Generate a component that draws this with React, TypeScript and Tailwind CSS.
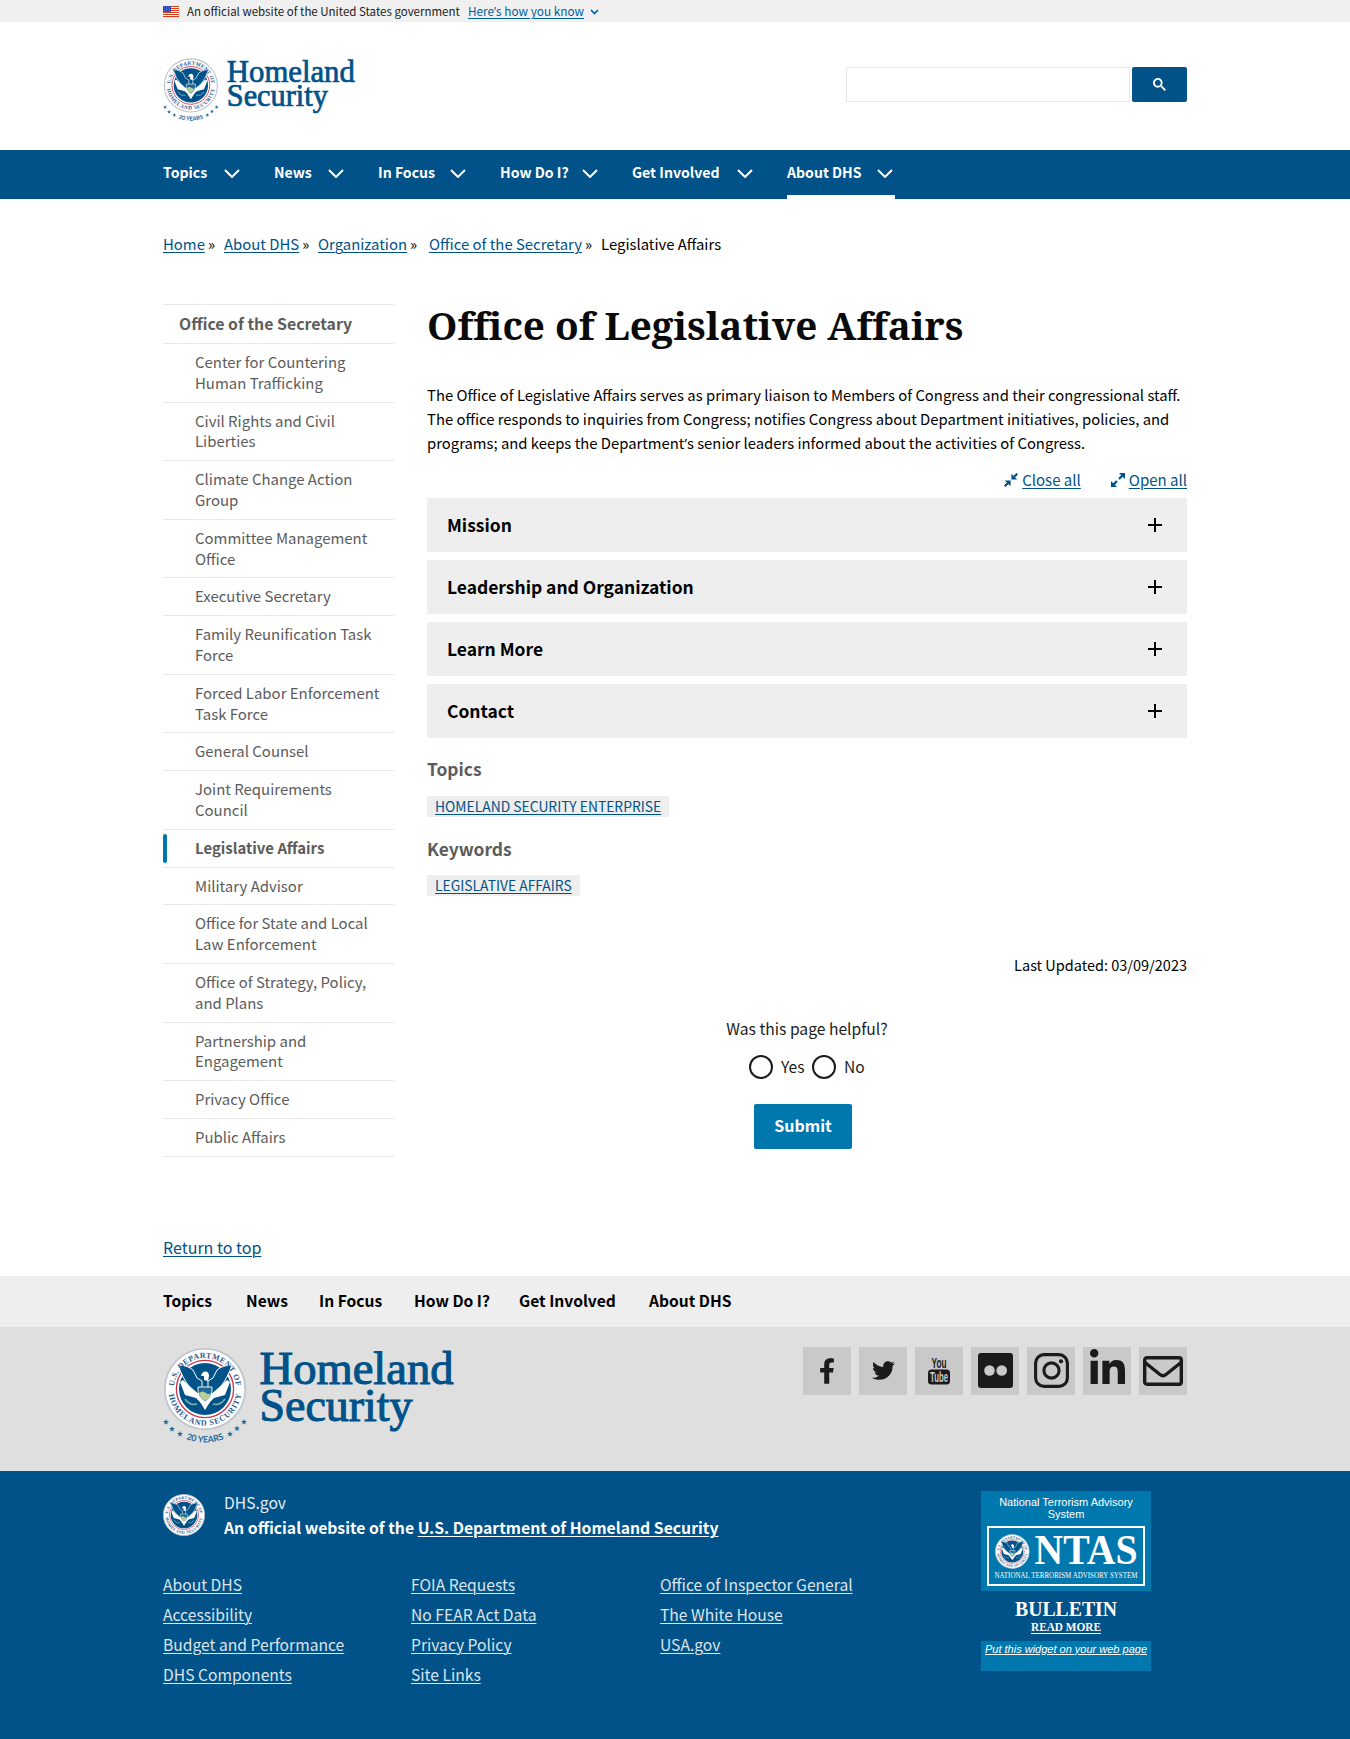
import React, { useId } from "react";
import { FaFacebookF, FaLinkedinIn, FaTwitter } from "react-icons/fa";

const sans = "font-['Noto_Sans_CJK_SC','Open_Sans',sans-serif]";
const link = "underline decoration-1 underline-offset-2";

const mainNav = [
  { label: "Topics", width: "w-[79px]", current: false },
  { label: "News", width: "w-[72px]", current: false },
  { label: "In Focus", width: "w-[90px]", current: false },
  { label: "How Do I?", width: "w-[100px]", current: false },
  { label: "Get Involved", width: "w-[123px]", current: false },
  { label: "About DHS", width: "w-[108px]", current: true },
];

const crumbs = [
  { label: "Home", width: "w-[61px]" },
  { label: "About DHS", width: "w-[94px]" },
  { label: "Organization", width: "w-[111px]" },
  { label: "Office of the Secretary", width: "w-[172px]" },
];

const sideLinks: string[][] = [
  ["Center for Countering", "Human Trafficking"],
  ["Civil Rights and Civil", "Liberties"],
  ["Climate Change Action", "Group"],
  ["Committee Management", "Office"],
  ["Executive Secretary"],
  ["Family Reunification Task", "Force"],
  ["Forced Labor Enforcement", "Task Force"],
  ["General Counsel"],
  ["Joint Requirements", "Council"],
  ["Legislative Affairs"],
  ["Military Advisor"],
  ["Office for State and Local", "Law Enforcement"],
  ["Office of Strategy, Policy,", "and Plans"],
  ["Partnership and", "Engagement"],
  ["Privacy Office"],
  ["Public Affairs"],
];

const footerNav = [
  { label: "Topics", width: "w-[83px]" },
  { label: "News", width: "w-[73px]" },
  { label: "In Focus", width: "w-[95px]" },
  { label: "How Do I?", width: "w-[105px]" },
  { label: "Get Involved", width: "w-[130px]" },
  { label: "About DHS", width: "w-[90px]" },
];

const footerLinks = [
  ["About DHS", "Accessibility", "Budget and Performance", "DHS Components"],
  ["FOIA Requests", "No FEAR Act Data", "Privacy Policy", "Site Links"],
  ["Office of Inspector General", "The White House", "USA.gov"],
];

/* Department seal drawn around (0, 0) with a radius of 41 units. */
function Seal() {
  const id = useId();
  return (
    <g>
      <circle r="40.2" fill="#fff" stroke="#bcc3cb" strokeWidth="1.6" />
      <circle r="28.6" fill="#fff" stroke="#c8324a" strokeWidth="1.3" />
      <circle r="26" fill="#005288" />
      {/* white lower feathers */}
      <path d="M-25 -7 L-20 6 L-9 9 L-4 14 L4 14 L9 9 L20 6 L25 -7 L22 -9 L9 3 L4 -2 L-4 -2 L-9 3 L-22 -9 Z" fill="#fff" />
      {/* raised wings */}
      <path d="M-27 -24 Q-18 -24 -12 -19 L-8 -11 L-3 -8 L-3 0 L-7 5 L-16 -3 Q-22 -10 -27 -24 Z" fill="#005288" stroke="#fff" strokeWidth="1" />
      <path d="M27 -24 Q18 -24 12 -19 L8 -11 L3 -8 L3 0 L7 5 L16 -3 Q22 -10 27 -24 Z" fill="#005288" stroke="#fff" strokeWidth="1" />
      {/* head */}
      <path d="M-4 -13 Q-3 -18 1 -17.5 Q4 -17 4 -13 L3 -8 L-1 -9 L-1 -13 Z" fill="#fff" />
      {/* shield */}
      <path d="M-7 -2 L7 -2 Q8 8 0 13 Q-8 8 -7 -2 Z" fill="#1f6795" stroke="#fff" strokeWidth=".9" />
      <path d="M-6 4 Q-2 1 1 4 Q4 6 6 4 Q4 10 0 12 Q-4 10 -6 4 Z" fill="#b9cf9a" />
      <path d="M-5 13 L0 21 L5 13 Z" fill="#fff" />
      <path d="M-20 10 Q-15 17 -8 15 M20 10 Q15 17 8 15" fill="none" stroke="#7fb3b0" strokeWidth="1.4" />
      <path id={id + "t"} d="M-31 0 A31 31 0 0 1 31 0" fill="none" />
      <path id={id + "b"} d="M-36.6 0 A36.6 36.6 0 0 0 36.6 0" fill="none" />
      <g className="font-['Liberation_Serif',serif]" fontSize="8" fontWeight="700" fill="#1f5c8f">
        <text textAnchor="middle" textLength="92">
          <textPath href={"#" + id + "t"} startOffset="50%">U.S. DEPARTMENT OF</textPath>
        </text>
        <text textAnchor="middle" textLength="104">
          <textPath href={"#" + id + "b"} startOffset="50%">HOMELAND SECURITY</textPath>
        </text>
      </g>
    </g>
  );
}

function Star({ x, y }: { x: number; y: number }) {
  return (
    <path
      transform={`translate(${x} ${y})`}
      d="M0 -3 L.8 -.9 L3 -.9 L1.2 .5 L1.9 2.6 L0 1.4 L-1.9 2.6 L-1.2 .5 L-3 -.9 L-.8 -.9 Z"
      fill="#1d6a9f"
    />
  );
}

function Logo({ className }: { className: string }) {
  const id = useId();
  return (
    <svg viewBox="0 0 292 100" className={`${className} overflow-visible`} role="img" aria-label="Homeland Security">
      <g transform="translate(42 43)">
        <Seal />
        <Star x={-39} y={33} />
        <Star x={-33} y={40} />
        <Star x={-25} y={45} />
        <Star x={25} y={45} />
        <Star x={32} y={39.5} />
        <Star x={39} y={33} />
        <path id={id} d="M-53.5 0 A53.5 53.5 0 0 0 53.5 0" fill="none" />
        <text className="font-['Lato',sans-serif]" fontSize="8.8" fontWeight="700" fill="#1d6a9f" textAnchor="middle" textLength="39">
          <textPath href={"#" + id} startOffset="50%">20 YEARS</textPath>
        </text>
      </g>
      <g className="font-['Liberation_Serif',serif]" fontSize="46.5" fill="#005288" stroke="#005288" strokeWidth="1.1">
        <text x="96.5" y="38.4" textLength="194" lengthAdjust="spacingAndGlyphs">Homeland</text>
        <text x="96.5" y="74.7" textLength="153" lengthAdjust="spacingAndGlyphs">Security</text>
      </g>
    </svg>
  );
}

function Flag() {
  return (
    <svg viewBox="0 0 16 11" className="h-[11px] w-4">
      <rect width="16" height="11" fill="#fff" />
      {[0, 2, 4, 6, 8, 10].map((y) => (
        <rect key={y} y={y} width="16" height="1" fill="#db3e1f" />
      ))}
      <rect width="8" height="6" fill="#1e33b1" />
      {[1, 3, 5].map((y) => (
        <path key={y} d={`M.8 ${y} h6.8`} stroke="#fff" strokeWidth=".7" strokeDasharray=".8 1.1" />
      ))}
    </svg>
  );
}

function Chevron() {
  return (
    <svg viewBox="0 0 16 9" className="h-[9px] w-4 shrink-0" fill="none" stroke="#fff" strokeWidth="2">
      <path d="M1 1 L8 8 L15 1" />
    </svg>
  );
}

function Apostrophe() {
  return <span className="font-['Open_Sans',sans-serif]">’</span>;
}

function Arrows({ inward }: { inward: boolean }) {
  return (
    <svg viewBox="0 0 14 14" className="h-3.5 w-3.5" fill="#005288" stroke="#005288">
      {inward ? (
        <>
          <path d="M7.4 .8 L7.4 6.6 L13.2 6.6 Z M6.6 13.2 L6.6 7.4 L.8 7.4 Z" stroke="none" />
          <path d="M8.5 5.5 L13.3 .7 M.7 13.3 L5.5 8.5" strokeWidth="2.2" />
        </>
      ) : (
        <>
          <path d="M8 0 L14 0 L14 6 Z M0 8 L0 14 L6 14 Z" stroke="none" />
          <path d="M8 6 L11.6 2.4 M6 8 L2.4 11.6" strokeWidth="2.2" />
        </>
      )}
    </svg>
  );
}

function YouTubeMark() {
  return (
    <svg viewBox="0 0 22 28" className="h-7 w-[22px] overflow-visible">
      <rect x="0" y="12.5" width="22" height="15" rx="3.5" fill="#1b1b1b" />
      <g className="font-['Liberation_Sans',sans-serif]" fontWeight="700">
        <text x="3.5" y="10.8" fontSize="14.5" fill="#1b1b1b" textLength="15" lengthAdjust="spacingAndGlyphs">You</text>
        <text x="2" y="25.2" fontSize="14.5" fill="#c9c9c9" textLength="18" lengthAdjust="spacingAndGlyphs">Tube</text>
      </g>
    </svg>
  );
}

function FlickrMark() {
  return (
    <svg viewBox="0 0 35 35" className="h-[35px] w-[35px]">
      <rect width="35" height="35" rx="3" fill="#1b1b1b" />
      <circle cx="11.5" cy="17.5" r="5.3" fill="#c9c9c9" />
      <circle cx="23.7" cy="17.5" r="5.3" fill="#c9c9c9" />
    </svg>
  );
}

function InstagramMark() {
  return (
    <svg viewBox="0 0 35 35" className="h-[35px] w-[35px]" fill="none" stroke="#1b1b1b" strokeWidth="3.1">
      <rect x="1.6" y="1.6" width="31.8" height="31.8" rx="8.5" />
      <circle cx="17.5" cy="17.5" r="7.6" />
      <circle cx="27" cy="8.3" r="2.1" fill="#1b1b1b" stroke="none" />
    </svg>
  );
}

function MailMark() {
  return (
    <svg viewBox="0 0 40 30" className="h-[30px] w-10" fill="none" stroke="#1b1b1b" strokeWidth="3.4">
      <rect x="1.7" y="1.7" width="36.6" height="26.6" rx="2.2" />
      <path d="M2 6.5 L17 18.5 Q20 21 23 18.5 L38 6.5" />
    </svg>
  );
}

function Accordion({ title }: { title: string }) {
  return (
    <button className="flex h-[54px] w-full items-center justify-between bg-[#eee] pr-[25px] pl-5 text-left">
      <span className="text-[17.45px] leading-6 font-bold text-black">{title}</span>
      <svg viewBox="0 0 14 14" className="h-3.5 w-3.5" stroke="#000" strokeWidth="2">
        <path d="M7 0 V14 M0 7 H14" />
      </svg>
    </button>
  );
}

function Tag({ children }: { children: string }) {
  return (
    <div className="flex">
      <span className="h-[21px] bg-[#eee] px-2 text-[13.85px] leading-5 text-[#005288]">
        <a className={link}>{children}</a>
      </span>
    </div>
  );
}

function NtasBadge() {
  return (
    <svg viewBox="0 0 158 60" className="h-[60px] w-[158px] overflow-visible">
      <rect x="1" y="1" width="156" height="58" fill="none" stroke="#fff" strokeWidth="2" />
      <g transform="translate(25.3 25.5) scale(.42)">
        <Seal />
      </g>
      <g className="font-['Liberation_Serif',serif]" fill="#fff">
        <text x="47.5" y="38" fontSize="42" fontWeight="700" textLength="103" lengthAdjust="spacingAndGlyphs">NTAS</text>
        <text x="7.5" y="51.5" fontSize="7.6" textLength="143" lengthAdjust="spacingAndGlyphs">NATIONAL TERRORISM ADVISORY SYSTEM</text>
      </g>
    </svg>
  );
}

export default function App() {
  return (
    <div className={`${sans} min-h-[1739px] w-full bg-white text-black`}>
      <div className="h-[22px] bg-[#f0f0f0]">
        <div className="mx-auto flex w-[1024px] text-[11.5px] leading-[22px] whitespace-nowrap text-[#1b1b1b]">
          <span className="pt-1.5">
            <Flag />
          </span>
          <span className="ml-2 w-[281px]">An official website of the United States government</span>
          <a className="w-[117px] text-[11.8px] text-[#005ea2] underline decoration-1 underline-offset-[1.5px]">
            Here<Apostrophe />s how you know
          </a>
          <svg viewBox="0 0 9 6" className="mt-[9px] ml-[5px] h-1.5 w-[9px]" fill="none" stroke="#005ea2" strokeWidth="1.6">
            <path d="M1 1 L4.5 4.5 L8 1" />
          </svg>
        </div>
      </div>

      <header>
        <div className="mx-auto flex h-32 w-[1024px] items-start justify-between">
          <Logo className="mt-[35px] h-[66px] w-[193px]" />
          <form className="mt-[45px] flex gap-0.5">
            <input className="h-[35px] w-[284px] border border-[#e6e6e6] bg-white" aria-label="Search" />
            <button type="button" aria-label="Submit search" className="flex h-[35px] w-[55px] items-center justify-center rounded-[2px] bg-[#005288]">
              <svg viewBox="0 0 13 13" className="h-[13px] w-[13px]" fill="#fff">
                <path d="m4.8495 7.8226c0.82666 0 1.5262-0.29146 2.0985-0.87438 0.57232-0.58292 0.86378-1.2877 0.87438-2.1144 0.010599-0.82666-0.28086-1.5262-0.87438-2.0985-0.59352-0.57232-1.293-0.86378-2.0985-0.87438-0.8055-0.010599-1.5103 0.28086-2.1144 0.87438-0.60414 0.59352-0.8956 1.293-0.87438 2.0985 0.021197 0.8055 0.31266 1.5103 0.87438 2.1144 0.56172 0.60414 1.2665 0.8956 2.1144 0.87438zm4.4695 0.2115 3.681 3.6819-1.259 1.284-3.6817-3.7 0.0019784-0.69479-0.090043-0.098846c-0.87973 0.76087-1.92 1.1413-3.1207 1.1413-1.3553 0-2.5025-0.46363-3.4417-1.3909s-1.4088-2.0686-1.4088-3.4239c0-1.3553 0.4696-2.4966 1.4088-3.4239 0.9392-0.92727 2.0864-1.3969 3.4417-1.4088 1.3553-0.011889 2.4906 0.45771 3.406 1.4088 0.9154 0.95107 1.379 2.0924 1.3909 3.4239 0 1.2126-0.38043 2.2588-1.1413 3.1385l0.098834 0.090049z" />
              </svg>
            </button>
          </form>
        </div>
        <nav className="h-[49px] bg-[#005288]">
          <ul className="mx-auto flex w-[1024px] gap-8 text-white">
            {mainNav.map((item) => (
              <li
                key={item.label}
                className={`${item.width} ${item.current ? "border-b-4 border-white" : ""} flex h-[49px] items-start justify-between pr-0.5 text-[14.1px] leading-[44px] font-bold whitespace-nowrap`}
              >
                {item.label}
                <span className="flex pt-[19px]">
                  <Chevron />
                </span>
              </li>
            ))}
          </ul>
        </nav>
      </header>

      <main className="mx-auto w-[1024px]">
        <div className="flex pt-8 text-[14.9px] leading-[25px] whitespace-nowrap">
          {crumbs.map((c) => (
            <span key={c.label} className={`${c.width} flex gap-[3px]`}>
              <a className={`${link} text-[#005288]`}>{c.label}</a>
              <span>»</span>
            </span>
          ))}
          <span>Legislative Affairs</span>
        </div>

        <div className="mt-12 flex">
          <aside className="w-[231px] shrink-0">
            <ul className="border-y border-[#e8e8e8] leading-[20.8px] whitespace-nowrap text-[#5c5c5c]">
              <li className="px-4 py-2 text-[15.85px] leading-[22.1px] font-bold">Office of the Secretary</li>
              {sideLinks.map((lines) => {
                const current = lines[0] === "Legislative Affairs";
                return (
                  <li
                    key={lines[0]}
                    className={`${current ? "font-bold" : ""} relative border-t border-[#e8e8e8] py-2 pl-8 text-[14.95px]`}
                  >
                    {current && <span className="absolute top-1 bottom-1 left-0 w-1 rounded-full bg-[#0076ad]" />}
                    {lines.map((line) => (
                      <div key={line}>{line}</div>
                    ))}
                  </li>
                );
              })}
            </ul>
          </aside>

          <section className="ml-[33px] w-[760px]">
            <h1 className="font-['Noto_Serif','DejaVu_Serif_Condensed',serif] text-[38.65px] leading-[42px] font-bold whitespace-nowrap text-[#0a0a0a] [font-variant-ligatures:none]">
              Office of Legislative Affairs
            </h1>
            <p className="mt-[37px] text-[14.83px] leading-6 whitespace-nowrap">
              The Office of Legislative Affairs serves as primary liaison to Members of Congress and their congressional staff.
              <br />
              The office responds to inquiries from Congress; notifies Congress about Department initiatives, policies, and
              <br />
              programs; and keeps the Department
              <Apostrophe />s senior leaders informed about the activities of Congress.
            </p>
            <div className="mt-[13px] flex justify-end gap-[30px] text-[15px] leading-[23px] text-[#005288]">
              <span className="flex gap-1">
                <span className="pt-[5px]">
                  <Arrows inward />
                </span>
                <a className={link}>Close all</a>
              </span>
              <span className="flex gap-1">
                <span className="pt-[5px]">
                  <Arrows inward={false} />
                </span>
                <a className={link}>Open all</a>
              </span>
            </div>
            <div className="mt-[7px] flex flex-col gap-2">
              <Accordion title="Mission" />
              <Accordion title="Leadership and Organization" />
              <Accordion title="Learn More" />
              <Accordion title="Contact" />
            </div>
            <h2 className="mt-[19px] mb-[15px] text-[17.4px] leading-6 font-bold text-[#5c5c5c]">Topics</h2>
            <Tag>HOMELAND SECURITY ENTERPRISE</Tag>
            <h2 className="mt-5 mb-3.5 text-[17.4px] leading-6 font-bold text-[#5c5c5c]">Keywords</h2>
            <Tag>LEGISLATIVE AFFAIRS</Tag>
            <p className="mt-[57px] text-right text-[14.5px] leading-6">Last Updated: 03/09/2023</p>
            <p className="mt-10 text-center text-[15.65px] leading-6 text-[#1b1b1b]">Was this page helpful?</p>
            <div className="mt-3.5 ml-[322px] flex h-6 text-[15.6px] leading-[22px] text-[#1b1b1b]">
              <label className="flex w-[63px] gap-2">
                <span className="h-6 w-6 rounded-full border-2 border-[#1b1b1b]" />
                Yes
              </label>
              <label className="flex gap-2">
                <span className="h-6 w-6 rounded-full border-2 border-[#1b1b1b]" />
                No
              </label>
            </div>
            <button className="mt-[25px] ml-[327px] flex h-[45px] w-[98px] justify-center rounded-[2px] bg-[#0078ae] text-[16px] leading-[42px] font-bold text-white">
              Submit
            </button>
          </section>
        </div>

        <div className="mt-[78px] mb-[17px] text-[16px] leading-6">
          <a className={`${link} text-[#005288]`}>Return to top</a>
        </div>
      </main>

      <footer>
        <nav className="h-[51px] bg-[#eee]">
          <ul className="mx-auto flex w-[1024px] text-[15.6px] leading-[48px] font-bold whitespace-nowrap">
            {footerNav.map((item) => (
              <li key={item.label} className={item.width}>
                {item.label}
              </li>
            ))}
          </ul>
        </nav>
        <div className="h-36 bg-[#dfdfdf]">
          <div className="mx-auto flex w-[1024px] justify-between">
            <Logo className="mt-[19px] h-[100px] w-[292px]" />
            <div className="mt-5 flex gap-2 text-[#1b1b1b] *:flex *:h-12 *:w-12 *:items-center *:justify-center *:bg-[#c9c9c9]">
              <a><FaFacebookF className="h-[26px] w-4" /></a>
              <a><FaTwitter className="h-[23px] w-[23px]" /></a>
              <a><YouTubeMark /></a>
              <a><FlickrMark /></a>
              <a><InstagramMark /></a>
              <a><FaLinkedinIn className="mb-1 h-10 w-[35px]" /></a>
              <a><MailMark /></a>
            </div>
          </div>
        </div>
        <div className="h-[268px] bg-[#005288] text-[15.65px] text-[#e4ecf2]">
          <div className="mx-auto flex w-[1024px]">
            <div className="w-[818px] pt-[19px]">
              <div className="flex">
                <svg viewBox="-41 -41 82 82" className="mt-1 h-[42px] w-[42px]">
                  <Seal />
                </svg>
                <div className="ml-[19px] leading-[25px]">
                  <div>DHS.gov</div>
                  <div className="text-[15.75px] font-bold text-white">
                    An official website of the <a className={link}>U.S. Department of Homeland Security</a>
                  </div>
                </div>
              </div>
              <div className="mt-[30px] grid grid-cols-[248px_249px_1fr] leading-[30px] text-[#dce5ec]">
                {footerLinks.map((column) => (
                  <ul key={column[0]}>
                    {column.map((label) => (
                      <li key={label}>
                        <a className={link}>{label}</a>
                      </li>
                    ))}
                  </ul>
                ))}
              </div>
            </div>
            <div className="mt-5 w-[170px] font-['Liberation_Sans',sans-serif] text-[11px] leading-3 text-white">
              <div className="flex h-[100px] flex-col items-center bg-[#0078ae] pt-[5px] text-center">
                <div>
                  National Terrorism Advisory
                  <br />
                  System
                </div>
                <div className="mt-1.5">
                  <NtasBadge />
                </div>
              </div>
              <svg viewBox="0 0 170 50" className="h-[50px] w-[170px] font-['Liberation_Serif',serif]" fill="#fff">
                <text x="34" y="24.7" fontSize="22" fontWeight="700" textLength="102" lengthAdjust="spacingAndGlyphs">BULLETIN</text>
                <text x="50" y="40" fontSize="13" fontWeight="700" textLength="70" lengthAdjust="spacingAndGlyphs">READ MORE</text>
                <rect x="50" y="42" width="70" height="1" />
              </svg>
              <div className="h-[30px] bg-[#0078ae] pt-0.5 text-center whitespace-nowrap italic underline">
                Put this widget on your web page
              </div>
            </div>
          </div>
        </div>
      </footer>
    </div>
  );
}
